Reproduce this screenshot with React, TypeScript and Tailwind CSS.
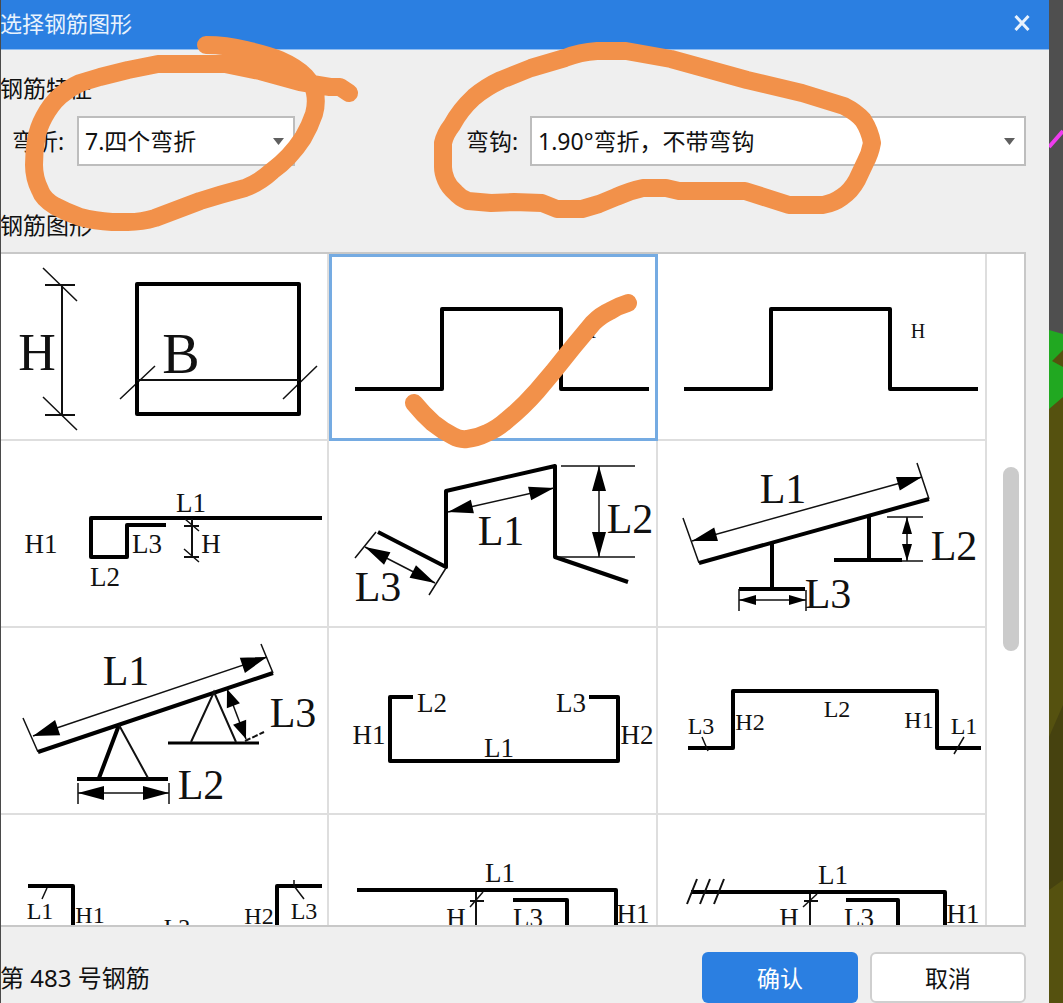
import { useState, type ReactNode } from 'react';

type Pt = [number, number];

const SMALL = 27;
const BIG = 42;

function Label({ x, y, size = SMALL, children }: { x: number; y: number; size?: number; children: string }) {
  return (
    <text x={x} y={y} fontSize={size} textAnchor="middle" fill="#111" stroke="none">{children}</text>
  );
}

// thick bar outline
function Bar({ d, w = 4 }: { d: string; w?: number }) {
  return <path d={d} fill="none" stroke="#000" strokeWidth={w} strokeLinejoin="round" />;
}

// thin helper lines
function Thin({ d, w = 1.5 }: { d: string; w?: number }) {
  return <path d={d} fill="none" stroke="#111" strokeWidth={w} />;
}

function head([tx, ty]: Pt, [fx, fy]: Pt, len: number, half: number) {
  const dist = Math.hypot(fx - tx, fy - ty);
  const ux = (fx - tx) / dist;
  const uy = (fy - ty) / dist;
  const bx = tx + ux * len;
  const by = ty + uy * len;
  return `M${tx} ${ty}L${bx - uy * half} ${by + ux * half}L${bx + uy * half} ${by - ux * half}Z`;
}

// dimension line with an arrow head on both ends
function Dim({ a, b, len = 25, half = 7 }: { a: Pt; b: Pt; len?: number; half?: number }) {
  return (
    <>
      <Thin d={`M${a[0]} ${a[1]}L${b[0]} ${b[1]}`} />
      <path d={head(a, b, len, half) + head(b, a, len, half)} fill="#000" />
    </>
  );
}

const shapes: { id: number; name: string; figure: ReactNode }[] = [
  {
    id: 480,
    name: 'H B',
    figure: (
      <>
        <Thin w={2} d="M62 31V161M45 31H75M45 161H75" />
        <Thin d="M43 14L77 47M43 143L77 176M120 145L155 112M283 145L317 112" />
        <Bar d="M137 30H299V160H137Z" />
        <Thin w={2} d="M137 126H299" />
        <Label x={37} y={116} size={52}>H</Label>
        <Label x={181} y={119} size={56}>B</Label>
      </>
    ),
  },
  {
    id: 483,
    name: 'H',
    figure: (
      <>
        <Bar d="M26 135H113V55H232V135H320" />
        <Label x={260} y={84} size={20}>H</Label>
      </>
    ),
  },
  {
    id: 484,
    name: 'H',
    figure: (
      <>
        <Bar d="M26 135H113V55H232V135H320" />
        <Label x={260} y={84} size={20}>H</Label>
      </>
    ),
  },
  {
    id: 485,
    name: 'H1 L1 L2 L3 H',
    figure: (
      <>
        <Bar d="M322 77H91V116H127V84H166" />
        <Thin w={2} d="M192 78V117M184 85H199M184 116H199" />
        <Thin d="M185 78L199 90M184 108L199 121" />
        <Label x={191} y={71}>L1</Label>
        <Label x={147} y={112}>L3</Label>
        <Label x={41} y={112}>H1</Label>
        <Label x={105} y={145}>L2</Label>
        <Label x={211} y={112}>H</Label>
      </>
    ),
  },
  {
    id: 486,
    name: 'L1 L2 L3',
    figure: (
      <>
        <Bar d="M49 91L117 126V50L226 25V116L299 141" />
        <Dim a={[119, 71]} b={[225, 47]} />
        <Dim a={[270, 25]} b={[270, 116]} />
        <Dim a={[36, 106]} b={[106, 142]} />
        <Thin d="M232 25H306M229 116H306M47 91L26 117M117 127L100 154" />
        <Label x={172} y={104} size={BIG}>L1</Label>
        <Label x={301} y={92} size={BIG}>L2</Label>
        <Label x={49} y={160} size={BIG}>L3</Label>
      </>
    ),
  },
  {
    id: 487,
    name: 'L1 L2 L3',
    figure: (
      <>
        <Bar d="M41 122L271 58" />
        <Bar d="M114 102V148M81 148H147M211 75V119M176 119H244" />
        <Thin d="M25 77L41 122M259 22L271 58M81 148V170M148 149V170M229 76H265M244 120H265" />
        <Dim a={[34, 100]} b={[264, 36]} />
        <Dim a={[81, 159]} b={[148, 159]} len={17} half={5} />
        <Dim a={[249, 76]} b={[249, 120]} len={17} half={5} />
        <Label x={125} y={62} size={BIG}>L1</Label>
        <Label x={296} y={119} size={BIG}>L2</Label>
        <Label x={170} y={167} size={BIG}>L3</Label>
      </>
    ),
  },
  {
    id: 488,
    name: 'L1 L2 L3',
    figure: (
      <>
        <Bar d="M38 124L273 45" />
        <Bar d="M119 97L99 150M77 151H168" />
        <Bar d="M168 115H259" w={3} />
        <Thin w={2} d="M119 97L148 150M191 114L214 64L236 114" />
        <Thin d="M23 90L38 124M261 16L273 45M78 155V176M169 155V176" />
        <path d="M245 113L264 104" stroke="#111" strokeWidth={2} strokeDasharray="6 2" />
        <Dim a={[33, 108]} b={[267, 29]} len={26} half={8} />
        <Dim a={[78, 165]} b={[169, 165]} len={26} />
        <Dim a={[227, 61]} b={[246, 111]} len={18} />
        <Label x={126} y={57} size={BIG}>L1</Label>
        <Label x={293} y={99} size={BIG}>L3</Label>
        <Label x={201} y={171} size={BIG}>L2</Label>
      </>
    ),
  },
  {
    id: 489,
    name: 'H1 L2 L1 L3 H2',
    figure: (
      <>
        <Bar d="M84 69H61V133H289V69H260" />
        <Label x={103} y={84}>L2</Label>
        <Label x={242} y={84}>L3</Label>
        <Label x={40} y={116}>H1</Label>
        <Label x={308} y={116}>H2</Label>
        <Label x={170} y={129}>L1</Label>
      </>
    ),
  },
  {
    id: 490,
    name: 'L3 H2 L2 H1 L1',
    figure: (
      <>
        <Bar d="M30 120H75V63H279V120H323" />
        <Thin d="M44 109L50 123M306 109L296 126" />
        <Label x={43} y={106} size={24}>L3</Label>
        <Label x={92} y={102} size={24}>H2</Label>
        <Label x={179} y={89} size={24}>L2</Label>
        <Label x={261} y={100} size={24}>H1</Label>
        <Label x={306} y={106} size={24}>L1</Label>
      </>
    ),
  },
  {
    id: 491,
    name: 'L1 H1 L2 H2 L3',
    figure: (
      <>
        <Bar d="M28 71H73V160H277V71H322" />
        <Thin d="M47 73L42 84M294 65V71L304 84" />
        <Label x={40} y={104} size={24}>L1</Label>
        <Label x={90} y={108} size={24}>H1</Label>
        <Label x={177} y={120} size={24}>L2</Label>
        <Label x={259} y={109} size={24}>H2</Label>
        <Label x={304} y={104} size={24}>L3</Label>
      </>
    ),
  },
  {
    id: 492,
    name: 'L1 H L3 H1',
    figure: (
      <>
        <Bar d="M28 75H287V140H238V85H184" />
        <Thin w={2} d="M147 77V130M141 86H155" />
        <Thin d="M141 92L154 77" />
        <Label x={171} y={67}>L1</Label>
        <Label x={304} y={108}>H1</Label>
        <Label x={127} y={112}>H</Label>
        <Label x={199} y={112}>L3</Label>
      </>
    ),
  },
  {
    id: 493,
    name: 'L1 H L3 H1',
    figure: (
      <>
        <Bar d="M33 77H287V140H240V85H188" />
        <Thin w={2} d="M39 64L29 89M52 64L42 89M66 64L56 89" />
        <Thin w={2} d="M152 79V130M146 86H160" />
        <Thin d="M145 92L159 79" />
        <Label x={175} y={69}>L1</Label>
        <Label x={305} y={108}>H1</Label>
        <Label x={131} y={112}>H</Label>
        <Label x={201} y={112}>L3</Label>
      </>
    ),
  },
];

const bends = ['7.四个弯折', '6.三个弯折', '5.两个弯折'];
const hooks = ['1.90°弯折，不带弯钩', '2.90°弯折，带弯钩'];

function Combo({ id, options, className }: { id: string; options: string[]; className: string }) {
  return (
    <div className={`relative h-[50px] ${className}`}>
      <select id={id} className="h-full w-full appearance-none border-2 border-[#bdbdbd] bg-white pl-[6px] pr-8 text-[23px] outline-none">
        {options.map((o) => <option key={o}>{o}</option>)}
      </select>
      <svg className="pointer-events-none absolute right-[11px] top-[22px] h-[7px] w-[11px]" viewBox="0 0 11 7">
        <path d="M0 0H11L5.500 7Z" fill="#5f5f5f" />
      </svg>
    </div>
  );
}

export default function App() {
  const [selected, setSelected] = useState(483);

  return (
    <div className="relative flex h-screen min-h-[600px] overflow-hidden bg-[#4f4f4f] text-[23px] leading-8 text-[#111] [font-family:'Noto_Sans','Noto_Sans_CJK_SC',sans-serif]">
      <div className="flex min-w-0 flex-1 flex-col bg-[#efefef]">
        <header className="flex h-[50px] shrink-0 items-center justify-between border-b border-[#8fbcf0] bg-[#2b7fe1] pb-1 pr-[18px]">
          <h1 className="text-[22px] text-[#e8f2fd]">选择钢筋图形</h1>
          <button aria-label="关闭" className="p-px">
            <svg className="h-4 w-4" viewBox="0 0 16 16">
              <path d="M1.500 1L14.500 15M14.500 1L1.500 15" stroke="#e8f2fd" strokeWidth="3" />
            </svg>
          </button>
        </header>

        <main className="flex min-h-0 flex-1 flex-col pr-[23px] pt-[22px]">
          {/* Filters */}
          <h2>钢筋特征</h2>
          <div className="mt-3 flex items-center pl-3">
            <label htmlFor="bend" className="w-[65px] shrink-0">弯折:</label>
            <Combo id="bend" options={bends} className="w-[218px] shrink-0" />
            <label htmlFor="hook" className="ml-[171px] w-[64px] shrink-0">弯钩:</label>
            <Combo id="hook" options={hooks} className="min-w-0 flex-1" />
          </div>

          {/* Shape list */}
          <h2 className="mt-[43px]">钢筋图形</h2>
          <div className="mt-[11px] flex min-h-0 flex-1 overflow-hidden border-b-2 border-r-2 border-t-2 border-[#c8c8c8] bg-white">
            <div className="grid min-w-0 flex-1 auto-rows-[187px] grid-cols-3 overflow-hidden">
              {shapes.map((s) => (
                <button
                  key={s.id}
                  aria-label={s.name}
                  aria-pressed={selected === s.id}
                  onClick={() => setSelected(s.id)}
                  className={`border-b-2 border-r-2 border-[#dedede] ${selected === s.id ? 'outline-[3px] -outline-offset-3 outline-solid outline-[#75abe2]' : ''}`}
                >
                  <svg viewBox="0 0 327 185" className="h-full w-full overflow-visible [font-family:'Liberation_Serif',serif]">
                    {s.figure}
                  </svg>
                </button>
              ))}
            </div>
            <div className="flex w-[37px] shrink-0 justify-center pt-[213px]">
              <div className="ml-[10px] h-[184px] w-4 rounded-full bg-[#cbcbcb]" />
            </div>
          </div>
        </main>

        <footer className="flex shrink-0 items-start justify-between pr-[23px] pt-[25px]">
          <p className="pt-[10px] text-[24px]">第 {selected} 号钢筋</p>
          <div className="flex gap-3">
            <button className="h-[51px] w-[156px] rounded-md bg-[#2b7fe1] text-white">确认</button>
            <button className="h-[51px] w-[156px] rounded-md border-2 border-[#cfcfcf] bg-white">取消</button>
          </div>
        </footer>
      </div>

      {/* Model view behind the dialog */}
      <svg className="h-full w-[14px] shrink-0" viewBox="0 0 14 1003" preserveAspectRatio="xMinYMin slice">
        <path d="M0 0H14V340H0Z" fill="#4f4f4f" />
        <path d="M0 340H14V1003H0Z" fill="#55510f" />
        <path d="M0 737L14 705V880L0 890Z" fill="#46420f" />
        <path d="M0 330L14 334V350L3 361L14 367V397L0 409Z" fill="#21a821" />
        <path d="M0 147L14 131" stroke="#ee3cee" strokeWidth="4" />
      </svg>
      <div className="pointer-events-none absolute inset-y-0 left-0 w-px bg-[#4a4a4a]" />

      {/* Marker strokes */}
      <svg
        className="pointer-events-none absolute left-0 top-0 h-[460px] w-[1063px]"
        viewBox="0 0 1063 460"
        fill="none"
        stroke="#f2914a"
        strokeWidth="18"
        strokeLinecap="round"
        strokeLinejoin="round"
      >
        <path d="M206 45Q226 45 246 50Q268 55 280 60Q296 67 305 76Q314 86 315 93Q317 103 314 114Q310 126 303 138Q290 158 272 171Q260 182 245 188Q222 194 200 201L155 218Q142 222 128 222H112Q95 221 80 217Q66 212 55 206Q43 199 40 190Q34 178 34 165Q34 152 36 140Q38 128 44 117Q51 104 60 96Q69 88 80 83L100 77L128 70L158 64H225L260 71L300 82L330 87H340L349 93" />
        <path d="M443 143Q445 134 452 125Q460 110 474 97Q486 87 501 80L531 68L565 58Q580 52 597 51H626L671 59L700 67L747 80L802 93L844 106Q856 112 863 120Q870 131 872 143Q870 154 865 163L857 180Q851 191 842 197Q834 203 823 205H789L745 191H679L666 188H643Q629 191 616 197L599 204L582 209H557L542 203L514 202L491 203L468 201Q460 198 455 192Q449 187 446 180Q443 173 443 167Z" />
        <path d="M414 403Q423 414 433 423Q443 431 453 436Q460 440 467 439Q477 438 487 433Q497 429 507 420Q523 407 537 391L553 372L573 347L593 323Q601 315 610 311Q618 306 628 303" />
      </svg>
    </div>
  );
}
